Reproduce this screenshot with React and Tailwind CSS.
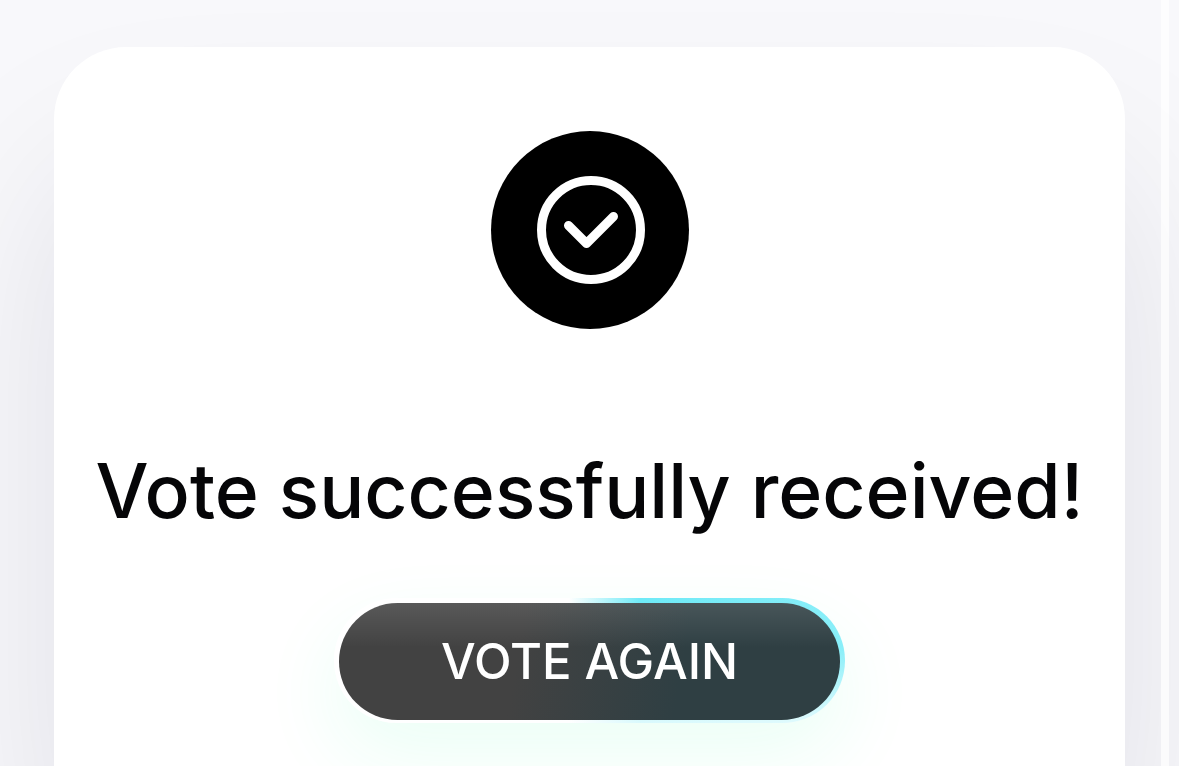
import React from 'react';

function CheckBadge() {
  return (
    <div className="flex size-[198px] items-center justify-center rounded-full bg-black">
      <svg viewBox="0 0 198 198" className="size-full" fill="none" stroke="white" strokeWidth="9" aria-hidden="true">
        <circle cx="100" cy="99" r="49.5" />
        <path d="M77.5 94.5 L95.5 112.5 L122.5 85.5" strokeLinecap="round" strokeLinejoin="round" />
      </svg>
    </div>
  );
}

function GlowButton({ children }) {
  return (
    <div className="w-full max-w-[511px] rounded-full bg-[linear-gradient(to_bottom,transparent_40%,rgba(255,255,255,0.75)_100%),linear-gradient(to_right,#ffffff_46%,#6eeaf7_60%,#8aeff9_100%)] px-[5px] pt-[5px] pb-[3px] shadow-[0_32px_80px_rgba(30,255,150,0.09)]">
      <button
        type="button"
        className="flex h-[117px] w-full items-center justify-center rounded-full bg-[linear-gradient(to_bottom,rgba(255,255,255,0.12),transparent_38%),linear-gradient(100deg,#424242_36%,#2f3f43_68%)] text-[49px] font-medium text-white"
      >
        {children}
      </button>
    </div>
  );
}

export default function App() {
  return (
    <div className="flex min-h-screen bg-[#f8f8fb] font-['Inter',sans-serif]">
      <main className="flex flex-1 pt-[47px] pr-9 pl-[54px]">
        <section className="flex flex-1 flex-col items-center rounded-t-[72px] bg-white pt-[84px] shadow-[0_120px_180px_rgba(20,20,50,0.10)]">
          <CheckBadge />
          <h1 className="mt-[114px] text-center text-[75px] leading-[96px] font-medium text-[#050507]">
            Vote successfully received!
          </h1>
          <div className="mt-[59px] flex w-full justify-center">
            <GlowButton>VOTE AGAIN</GlowButton>
          </div>
        </section>
      </main>
      <div className="z-10 mr-[10px] w-2 bg-white/70" />
    </div>
  );
}
